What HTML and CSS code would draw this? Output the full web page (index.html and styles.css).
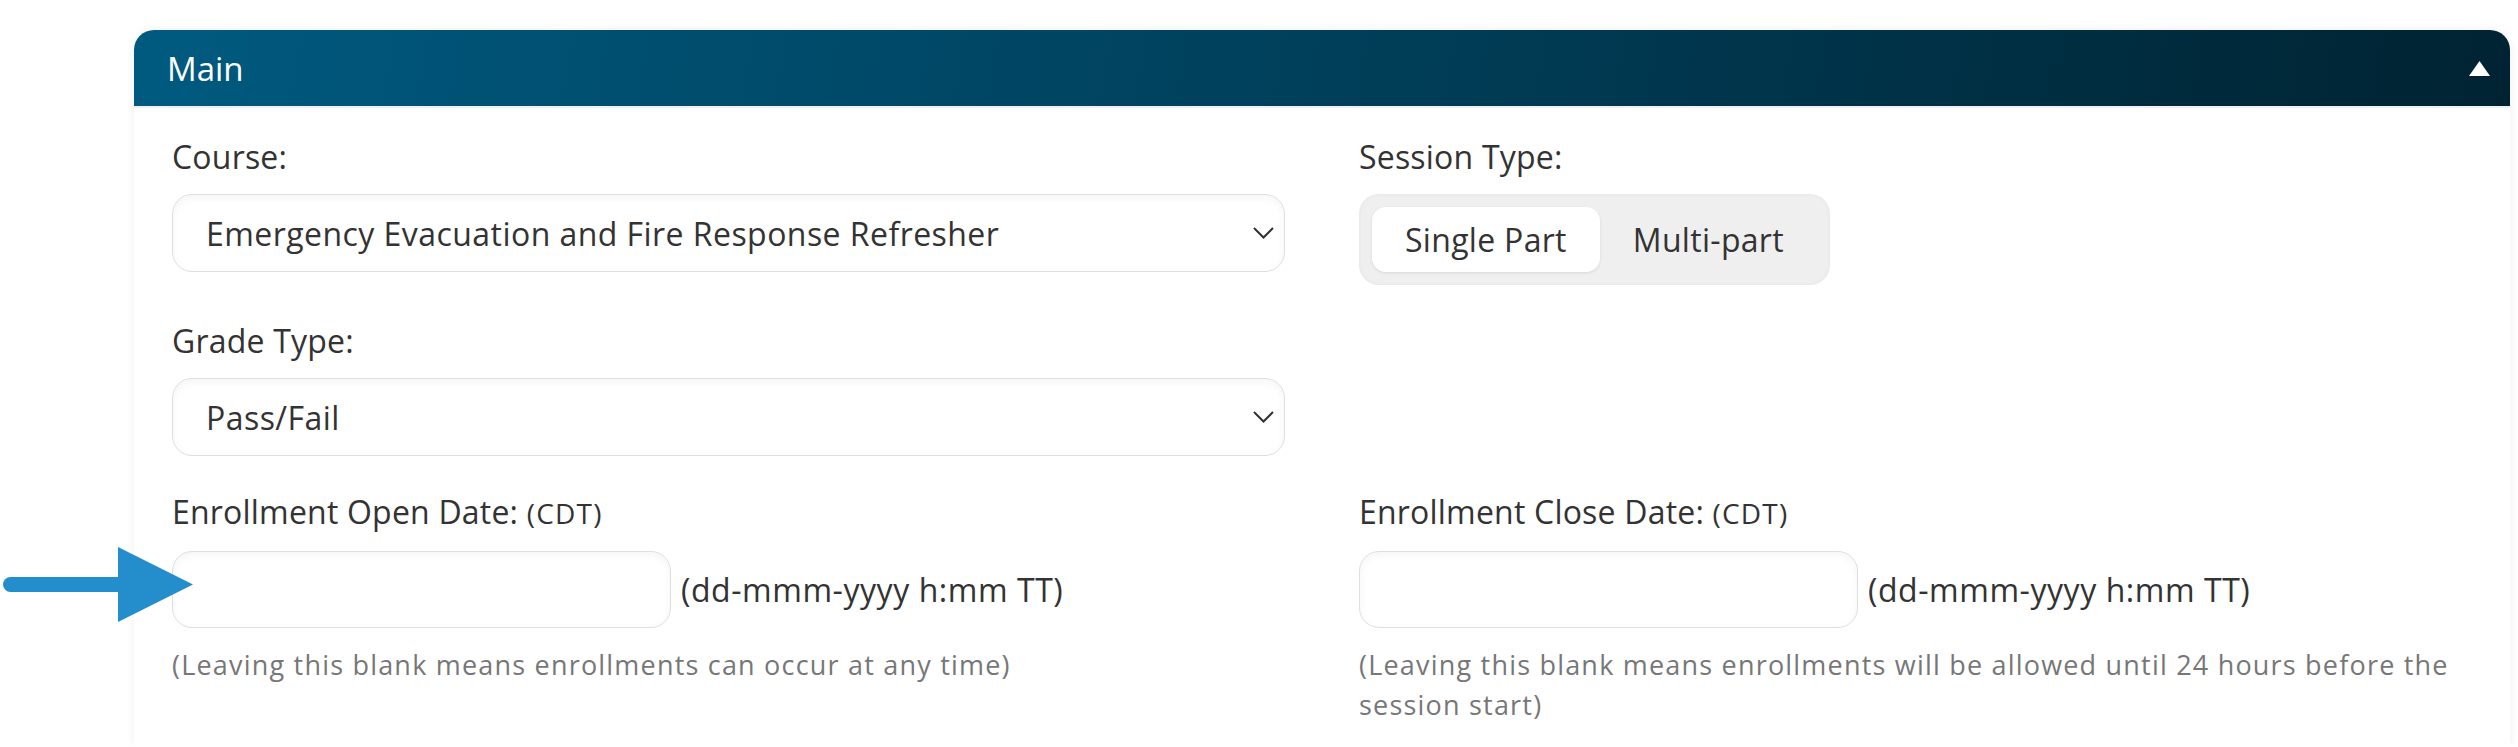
FILE: index.html
```html
<!DOCTYPE html>
<html lang="en">
<head>
  <meta charset="UTF-8" />
  <meta name="viewport" content="width=device-width, initial-scale=1.0">
  <title>Session - Main</title>
  <link rel="stylesheet" href="styles.css">
</head>
<body>

  <!-- Painel principal da sessão -->
  <div class="panel">
    <div class="panel-heading">
      <span class="panel-title">Main</span>
      <svg class="collapse-caret" width="21" height="15" viewBox="0 0 21 15">
        <polygon points="10.5,0 21,15 0,15" fill="#fff" />
      </svg>
    </div>

    <div class="panel-body">
      <div class="form-grid">

        <div class="field">
          <label class="field-label" for="course">Course:</label>
          <select id="course" class="control">
            <option>Emergency Evacuation and Fire Response Refresher</option>
          </select>
        </div>

        <div class="field">
          <label class="field-label">Session Type:</label>
          <div class="segmented">
            <button class="seg active">Single Part</button>
            <button class="seg">Multi-part</button>
          </div>
        </div>

        <div class="field">
          <label class="field-label" for="grade">Grade Type:</label>
          <select id="grade" class="control">
            <option>Pass/Fail</option>
          </select>
        </div>

        <div class="field"></div>

        <div class="field">
          <label class="field-label" for="openDate">Enrollment Open Date: <small>(CDT)</small></label>
          <div class="date-row">
            <input id="openDate" type="text" class="control date-input">
            <span class="date-format">(dd-mmm-yyyy h:mm TT)</span>
          </div>
          <p class="hint">(Leaving this blank means enrollments can occur at any time)</p>
        </div>

        <div class="field">
          <label class="field-label" for="closeDate">Enrollment Close Date: <small>(CDT)</small></label>
          <div class="date-row">
            <input id="closeDate" type="text" class="control date-input">
            <span class="date-format">(dd-mmm-yyyy h:mm TT)</span>
          </div>
          <p class="hint">(Leaving this blank means enrollments will be allowed until 24 hours before the session start)</p>
        </div>

      </div>
    </div>
  </div>

  <!-- Seta de destaque sobre o campo de abertura -->
  <svg class="pointer-arrow" width="190" height="75" viewBox="0 0 190 75">
    <line x1="7.5" y1="37.5" x2="120" y2="37.5" stroke="#248dcc" stroke-width="15" stroke-linecap="round" />
    <polygon points="115,0 190,37.5 115,75" fill="#248dcc" />
  </svg>

</body>
</html>
```

FILE: styles.css
```css
body {
  margin: 0;
  padding: 30px 8px 0 134px;
  background: #fff;
  font-family: 'Open Sans', 'Noto Sans', sans-serif;
  color: #333;
  overflow: hidden;
}

.panel {
  background: #fff;
  border-radius: 20px 20px 0 0;
  box-shadow: 0 0 10px rgba(0, 0, 0, 0.07);
}

.panel-heading {
  height: 76px;
  display: flex;
  align-items: center;
  justify-content: space-between;
  padding: 0 20px 0 33px;
  border-radius: 20px 20px 0 0;
  background: linear-gradient(100deg, #005a80 0%, #00425e 45%, #002332 100%);
  border-bottom: 2px solid #eef0f1;
}

.panel-title {
  color: #fff;
  font-size: 33px;
}

.panel-body {
  padding: 26px 38px 20px;
}

/* Duas colunas do formulário */
.form-grid {
  display: grid;
  grid-template-columns: 1fr 1fr;
  column-gap: 74px;
  row-gap: 33px;
}

.field-label {
  display: block;
  font-size: 32px;
  letter-spacing: 0.2px;
  line-height: 45px;
  margin-bottom: 15px;
}

.field-label small {
  font-size: 28px;
  letter-spacing: 1.2px;
}

.control {
  box-sizing: border-box;
  width: 100%;
  height: 78px;
  padding: 0 50px 0 33px;
  font-family: inherit;
  font-size: 32px;
  letter-spacing: 0.45px;
  color: #333;
  background-color: #fff;
  border: 1px solid #dfdfdf;
  border-radius: 20px;
  box-shadow: inset 0 3px 8px rgba(0, 0, 0, 0.045);
  outline: none;
}

select.control {
  appearance: none;
  -webkit-appearance: none;
  background-image: url("data:image/svg+xml,%3Csvg xmlns='http://www.w3.org/2000/svg' width='21' height='12' viewBox='0 0 21 12'%3E%3Cpolyline points='1,1 10.5,10.5 20,1' fill='none' stroke='%23333' stroke-width='2'/%3E%3C/svg%3E");
  background-repeat: no-repeat;
  background-position: right 10px center;
  background-size: 21px 12px;
}

/* Seletor de tipo de sessão */
.segmented {
  display: inline-flex;
  padding: 13px;
  background: #efefef;
  border-radius: 20px;
  box-shadow: inset 0 0 4px rgba(0, 0, 0, 0.05);
}

.seg {
  height: 65px;
  padding: 0 33px;
  font-family: inherit;
  font-size: 32px;
  letter-spacing: 0.3px;
  color: #333;
  background: transparent;
  border: none;
  border-radius: 14px;
  cursor: pointer;
}

.seg.active {
  background: #fff;
  box-shadow: 0 1px 3px rgba(0, 0, 0, 0.1);
}

.date-row {
  display: flex;
  align-items: center;
  gap: 10px;
}

.date-input {
  width: 499px;
  height: 77px;
}

.date-format {
  font-size: 32px;
  letter-spacing: 0.55px;
}

.hint {
  margin: 17px 0 0;
  font-size: 27px;
  letter-spacing: 1.2px;
  line-height: 40px;
  color: #777;
}

/* Seta azul por cima do formulário */
.pointer-arrow {
  position: absolute;
  left: 3px;
  top: 547px;
}
```
